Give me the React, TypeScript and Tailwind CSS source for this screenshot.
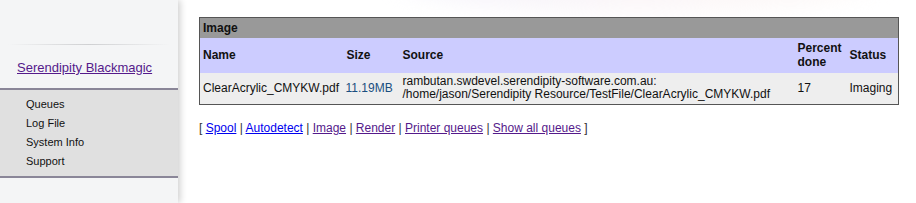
const FONT = "font-['Liberation_Sans',Arial,sans-serif]";

const MENU = ['Queues', 'Log File', 'System Info', 'Support'];

function Sidebar() {
  return (
    <div className="relative z-10 flex h-[203px] w-[178px] shrink-0 flex-col bg-[#f4f5f6] shadow-[2px_0_7px_rgba(0,0,0,0.2)]">
      <div className="h-[44px]" />
      <div className="mx-2 h-px bg-gradient-to-r from-transparent via-[#cfd0d2] to-transparent" />
      <div className="flex h-[43px] items-center pl-[17px] pt-[3px]">
        <a href="#" className="text-[13px] text-[#551a8b] underline">
          Serendipity Blackmagic
        </a>
      </div>
      <div className="h-[2px] bg-[#8a8698]" />
      <div className="flex flex-col bg-[#e0e0e0] pb-[5px] pl-[26px] pt-[5px]">
        {MENU.map((m) => (
          <span key={m} className="h-[19px] text-[11px] leading-[19px] text-[#111]">
            {m}
          </span>
        ))}
      </div>
      <div className="h-[2px] bg-[#8a8698]" />
      <div className="flex-1 bg-[#f4f5f6]" />
    </div>
  );
}

function JobTable() {
  return (
    <table className="w-[700px] table-fixed border-collapse border border-[#555] text-left text-[12px] text-[#111]">
      <colgroup>
        <col className="w-[145px]" />
        <col className="w-[55px]" />
        <col className="w-[396px]" />
        <col className="w-[52px]" />
        <col />
      </colgroup>
      <thead>
        <tr className="bg-[#999]">
          <th colSpan={5} className="h-[20px] px-[3px] font-bold">
            Image
          </th>
        </tr>
        <tr className="bg-[#ccccff]">
          <th className="h-[35px] px-[3px] font-bold">Name</th>
          <th className="px-[2px] font-bold">Size</th>
          <th className="px-[3px] font-bold">Source</th>
          <th className="px-[2px] leading-[14px] font-bold">
            Percent
            <br />
            done
          </th>
          <th className="px-[2px] font-bold">Status</th>
        </tr>
      </thead>
      <tbody>
        <tr className="bg-[#eeeeee]">
          <td className="h-[32px] whitespace-nowrap px-[3px]">ClearAcrylic_CMYKW.pdf</td>
          <td className="whitespace-nowrap px-[1px] text-[#1a4f80]">11.19MB</td>
          <td className="whitespace-nowrap px-[3px] leading-[13px]">
            rambutan.swdevel.serendipity-software.com.au:
            <br />
            /home/jason/Serendipity Resource/TestFile/ClearAcrylic_CMYKW.pdf
          </td>
          <td className="px-[2px]">17</td>
          <td className="px-[2px]">Imaging</td>
        </tr>
      </tbody>
    </table>
  );
}

const LINKS: [string, boolean][] = [
  ['Spool', false],
  ['Autodetect', false],
  ['Image', true],
  ['Render', true],
  ['Printer queues', true],
  ['Show all queues', true],
];

export default function App() {
  return (
    <div className={`flex h-[203px] w-[916px] overflow-hidden bg-white ${FONT}`}>
      <Sidebar />
      <div className="relative flex-1">
        <div className="pointer-events-none absolute left-[220px] top-[-60px] h-[72px] w-[480px] rounded-[50%] bg-gradient-to-r from-[#f4f2fb] via-[#fbf6f8] to-[#fdf8f6] blur-md" />
        <div className="relative pl-[21px] pt-[17px]">
          <JobTable />
          <p className="mt-[14px] text-[12px] text-[#333]">
            [{' '}
            {LINKS.map(([label, visited], i) => (
              <span key={label}>
                <a
                  href="#"
                  className={`underline ${visited ? 'text-[#551a8b]' : 'text-[#0000ee]'}`}
                >
                  {label}
                </a>
                {i < LINKS.length - 1 ? ' | ' : ' '}
              </span>
            ))}
            ]
          </p>
        </div>
      </div>
    </div>
  );
}
